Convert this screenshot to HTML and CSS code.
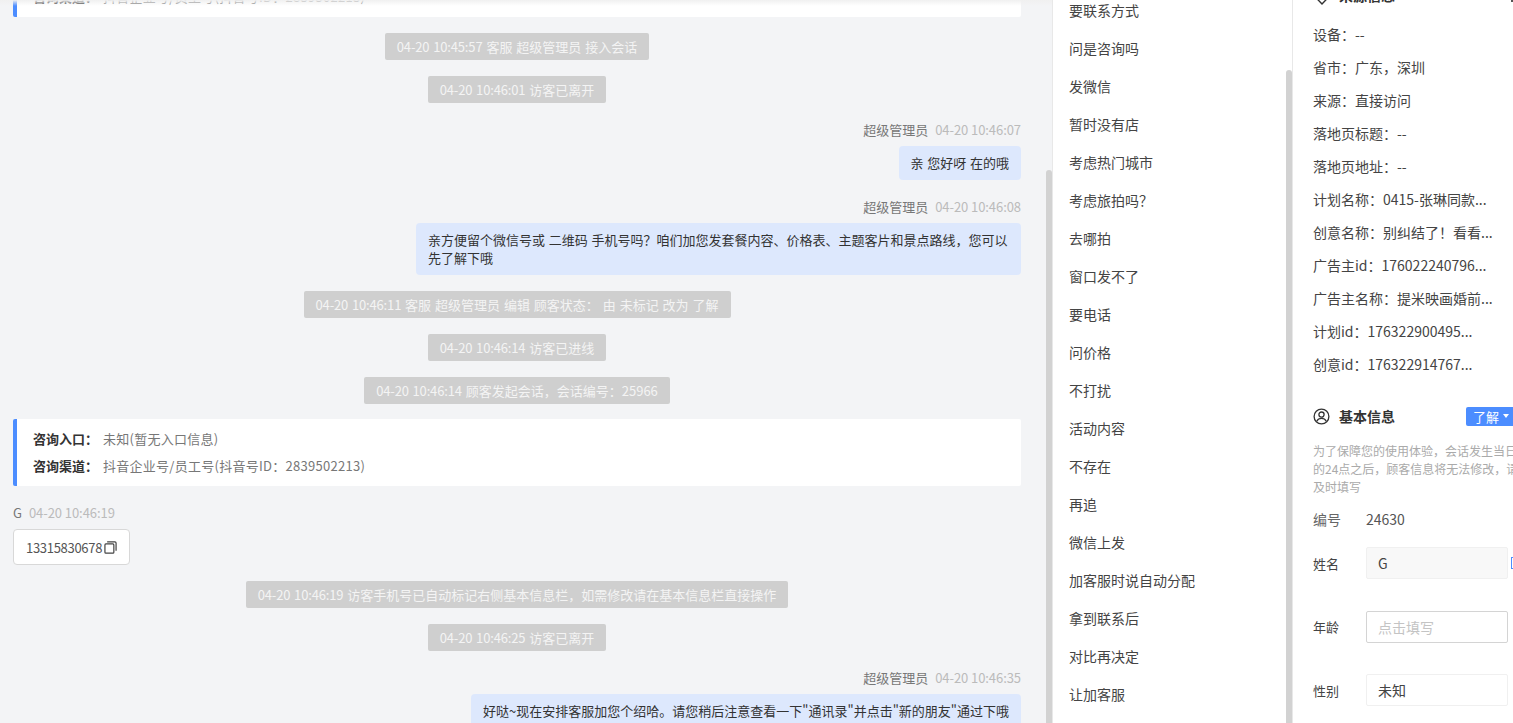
FILE: index.html
```html
<!DOCTYPE html>
<html lang="zh-CN">
<head>
    <meta charset="UTF-8">
    <meta name="viewport" content="width=device-width, initial-scale=1.0">
    <title>会话详情</title>
    <link rel="stylesheet" href="styles.css">
</head>
<body>
    <div class="layout">
        <div class="chat">
            <div class="chat-shadow"></div>
            <div class="scroll-thumb chat-thumb"></div>
            <div class="entry-card entry-card-top">
                <p class="entry-line"><b>咨询入口：</b>未知(暂无入口信息)</p>
                <p class="entry-line"><b>咨询渠道：</b>抖音企业号/员工号(抖音号ID：2839502213)</p>
            </div>
            <div class="notice"><span class="notice-time">04-20 10:45:57</span> 客服 超级管理员 接入会话</div>
            <div class="notice"><span class="notice-time">04-20 10:46:01</span> 访客已离开</div>
            <div class="msg-head"><span class="msg-name">超级管理员</span><span class="msg-time">04-20 10:46:07</span></div>
            <div class="bubble">亲 您好呀 在的哦</div>
            <div class="msg-head"><span class="msg-name">超级管理员</span><span class="msg-time">04-20 10:46:08</span></div>
            <div class="bubble">亲方便留个微信号或 二维码 手机号吗？咱们加您发套餐内容、价格表、主题客片和景点路线，您可以先了解下哦</div>
            <div class="notice"><span class="notice-time">04-20 10:46:11</span> 客服 超级管理员 编辑 顾客状态： 由 未标记 改为 了解</div>
            <div class="notice"><span class="notice-time">04-20 10:46:14</span> 访客已进线</div>
            <div class="notice"><span class="notice-time">04-20 10:46:14</span> 顾客发起会话，会话编号：25966</div>
            <div class="entry-card">
                <p class="entry-line"><b>咨询入口：</b>未知(暂无入口信息)</p>
                <p class="entry-line"><b>咨询渠道：</b>抖音企业号/员工号(抖音号ID：2839502213)</p>
            </div>
            <div class="msg-head msg-head-left"><span class="msg-name">G</span><span class="msg-time">04-20 10:46:19</span></div>
            <div class="phone-card">
                <span class="phone-num">13315830678</span>
                <svg class="copy-icon" width="13" height="13" viewBox="0 0 14 14" fill="none" stroke="#444" stroke-width="1.3">
                    <rect x="1" y="3.2" width="9.6" height="9.8" rx="1"/>
                    <path d="M3.4 1h8.4a1.2 1.2 0 0 1 1.2 1.2v8.2"/>
                </svg>
            </div>
            <div class="notice"><span class="notice-time">04-20 10:46:19</span> 访客手机号已自动标记右侧基本信息栏，如需修改请在基本信息栏直接操作</div>
            <div class="notice"><span class="notice-time">04-20 10:46:25</span> 访客已离开</div>
            <div class="msg-head"><span class="msg-name">超级管理员</span><span class="msg-time">04-20 10:46:35</span></div>
            <div class="bubble">好哒~现在安排客服加您个绍哈。请您稍后注意查看一下"通讯录"并点击"新的朋友"通过下哦</div>
        </div>

        <div class="phrases">
            <div class="scroll-thumb phrases-thumb"></div>
            <div class="phrase">要联系方式</div>
            <div class="phrase">问是咨询吗</div>
            <div class="phrase">发微信</div>
            <div class="phrase">暂时没有店</div>
            <div class="phrase">考虑热门城市</div>
            <div class="phrase">考虑旅拍吗？</div>
            <div class="phrase">去哪拍</div>
            <div class="phrase">窗口发不了</div>
            <div class="phrase">要电话</div>
            <div class="phrase">问价格</div>
            <div class="phrase">不打扰</div>
            <div class="phrase">活动内容</div>
            <div class="phrase">不存在</div>
            <div class="phrase">再追</div>
            <div class="phrase">微信上发</div>
            <div class="phrase">加客服时说自动分配</div>
            <div class="phrase">拿到联系后</div>
            <div class="phrase">对比再决定</div>
            <div class="phrase">让加客服</div>
        </div>

        <div class="info">
            <div class="info-title info-title-top">
                <svg class="title-icon source-icon" width="16" height="16" viewBox="0 0 16 16" fill="none" stroke="#333" stroke-width="1.4">
                    <path d="M8 15 1.5 8.2 4 3h8l2.500 5.200z"/>
                </svg>
                <span>来源信息</span>
                <i class="title-edge"></i>
            </div>
            <div class="info-row">设备：--</div>
            <div class="info-row">省市：广东，深圳</div>
            <div class="info-row">来源：直接访问</div>
            <div class="info-row">落地页标题：--</div>
            <div class="info-row">落地页地址：--</div>
            <div class="info-row">计划名称：0415-张琳同款...</div>
            <div class="info-row">创意名称：别纠结了！看看...</div>
            <div class="info-row">广告主id：176022240796...</div>
            <div class="info-row">广告主名称：提米映画婚前...</div>
            <div class="info-row">计划id：176322900495...</div>
            <div class="info-row">创意id：176322914767...</div>

            <div class="info-title info-title-basic">
                <svg class="title-icon" width="17" height="17" viewBox="0 0 17 17" fill="none" stroke="#333" stroke-width="1.3">
                    <circle cx="8.500" cy="8.500" r="7.400"/>
                    <circle cx="8.500" cy="6.600" r="2.600"/>
                    <path d="M3.800 13.200c1-2 2.600-2.800 4.700-2.800s3.700.8 4.700 2.800"/>
                </svg>
                <span>基本信息</span>
                <span class="status-tag">了解<i class="status-caret"></i></span>
            </div>
            <p class="info-tip">为了保障您的使用体验，会话发生当日的24点之后，顾客信息将无法修改，请及时填写</p>
            <div class="field field-plain">
                <span class="field-label">编号</span>
                <span class="field-value">24630</span>
            </div>
            <div class="field">
                <span class="field-label">姓名</span>
                <div class="field-box field-box-filled">G</div>
                <i class="field-edit"></i>
            </div>
            <div class="field">
                <span class="field-label">年龄</span>
                <div class="field-box field-box-empty">点击填写</div>
            </div>
            <div class="field">
                <span class="field-label">性别</span>
                <div class="field-box">未知</div>
            </div>
        </div>
    </div>
</body>
</html>
```

FILE: styles.css
```css
* {
    box-sizing: border-box;
    font-family: "Noto Sans CJK SC", "Noto Sans", sans-serif;
}
html, body {
    height: 100%;
}
body {
    margin: 0;
    overflow: hidden;
    background-color: #fff;
    color: #333;
}
.layout {
    display: flex;
    height: 723px;
    overflow: hidden;
}
.scroll-thumb {
    position: absolute;
    width: 6px;
    background-color: #d2d2d2;
    border-radius: 3px 3px 0 0;
}

/* chat column */
.chat {
    position: relative;
    width: 1053px;
    flex-shrink: 0;
    padding: 0 31px 0 13px;
    background-color: #f3f4f6;
    border-right: 1px solid #e8e8e8;
    display: flex;
    flex-direction: column;
    overflow: hidden;
}
.chat-shadow {
    position: absolute;
    top: 0;
    left: 0;
    right: 0;
    height: 6px;
    background: linear-gradient(#f0f0f0, rgba(240, 240, 240, 0));
    z-index: 2;
}
.chat-thumb {
    top: 170px;
    right: 0;
    bottom: 0;
}
.entry-card {
    background: #fff;
    border-left: 4px solid #4c8dff;
    border-radius: 2px;
    padding: 6px 16px 7px;
    margin-top: 15px;
    flex-shrink: 0;
}
.entry-card-top {
    margin-top: -50px;
}
.entry-line {
    margin: 0;
    height: 27px;
    line-height: 27px;
    font-size: 13px;
    letter-spacing: 0.27px;
    color: #777;
}
.entry-line b {
    color: #333;
    font-weight: 600;
    letter-spacing: 0;
    margin-right: 5px;
}
.notice {
    align-self: center;
    flex-shrink: 0;
    height: 27px;
    line-height: 27px;
    margin-top: 16px;
    padding: 0 12px;
    background-color: #cfcfcf;
    border-radius: 2px;
    color: #f4f4f4;
    font-size: 13px;
    word-spacing: 1px;
    white-space: nowrap;
}
.notice-time {
    letter-spacing: -0.15px;
}
.msg-head {
    align-self: flex-end;
    flex-shrink: 0;
    height: 18px;
    line-height: 18px;
    margin-top: 18px;
    font-size: 13px;
    white-space: nowrap;
}
.msg-head-left {
    align-self: flex-start;
}
.msg-name {
    color: #777;
}
.msg-time {
    color: #bbb;
    margin-left: 7px;
    letter-spacing: -0.07px;
}
.bubble {
    align-self: flex-end;
    flex-shrink: 0;
    max-width: 605px;
    margin-top: 7px;
    padding: 8px 12px;
    background-color: #dde8fd;
    border-radius: 4px;
    font-size: 13px;
    line-height: 18px;
    word-spacing: 0.8px;
    color: #333;
}
.phone-card {
    align-self: flex-start;
    flex-shrink: 0;
    display: flex;
    align-items: center;
    height: 36px;
    margin-top: 7px;
    padding: 0 12px;
    background: #fff;
    border: 1px solid #d8d8d8;
    border-radius: 4px;
    font-size: 13px;
    color: #555;
}
.phone-num {
    letter-spacing: -0.3px;
}
.copy-icon {
    display: block;
    margin-left: 2px;
}

/* quick phrases */
.phrases {
    position: relative;
    width: 240px;
    flex-shrink: 0;
    padding: 0 16px;
    margin-top: -9px;
    background: #fff;
    border-right: 1px solid #e8e8e8;
}
.phrases-thumb {
    top: 79px;
    right: 0;
    bottom: 0;
}
.phrase {
    height: 38px;
    line-height: 38px;
    font-size: 14px;
    color: #444;
    white-space: nowrap;
}

/* info column */
.info {
    width: 220px;
    flex-shrink: 0;
    padding: 0 0 0 20px;
    font-size: 13px;
    color: #444;
}
.info-title {
    display: flex;
    align-items: center;
    gap: 9px;
    font-size: 14px;
    font-weight: 600;
    color: #333;
    white-space: nowrap;
}
.title-icon {
    flex-shrink: 0;
}
.info-title-top {
    height: 20px;
    margin-top: -15px;
    margin-bottom: 13px;
}
.source-icon {
    margin: 4px 0 0 1px;
}
.title-edge {
    width: 2px;
    height: 13px;
    margin-left: auto;
    background-color: #555;
}
.info-title-basic {
    height: 24px;
    margin-top: 23px;
}
.status-tag {
    display: flex;
    align-items: center;
    flex-shrink: 0;
    height: 19px;
    margin-left: 62px;
    padding: 0 6px 0 7px;
    background-color: #4c8dff;
    border-radius: 2px 0 0 2px;
    color: #fff;
    font-size: 13px;
    font-weight: 400;
}
.status-caret {
    margin-left: 4px;
    border-left: 3px solid transparent;
    border-right: 3px solid transparent;
    border-top: 4px solid #fff;
}
.info-row {
    height: 33px;
    line-height: 33px;
    font-size: 14px;
    white-space: nowrap;
}
.info-tip {
    width: 210px;
    margin: 14px 0 0;
    font-size: 12px;
    line-height: 18px;
    color: #aaa;
}
.field {
    display: flex;
    align-items: center;
    height: 32px;
    margin-top: 31.5px;
    white-space: nowrap;
}
.field-plain {
    height: 18px;
    margin-top: 14px;
    margin-bottom: -12.5px;
    font-size: 14px;
    color: #666;
}
.field-label {
    width: 53px;
    flex-shrink: 0;
}
.field-value {
    color: #555;
}
.field-box {
    width: 142px;
    flex-shrink: 0;
    height: 32px;
    line-height: 30px;
    padding: 0 11px;
    background: #fff;
    border: 1px solid #f0f0f0;
    border-radius: 2px;
    font-size: 14px;
    color: #444;
}
.field-box-filled {
    background-color: #f8f8f8;
}
.field-box-empty {
    border-color: #d4d4d4;
    color: #c4c4c4;
}
.field-edit {
    width: 5px;
    height: 12px;
    margin-left: 3px;
    border: 1px solid #4c8dff;
    border-right: none;
    flex-shrink: 0;
}
```
